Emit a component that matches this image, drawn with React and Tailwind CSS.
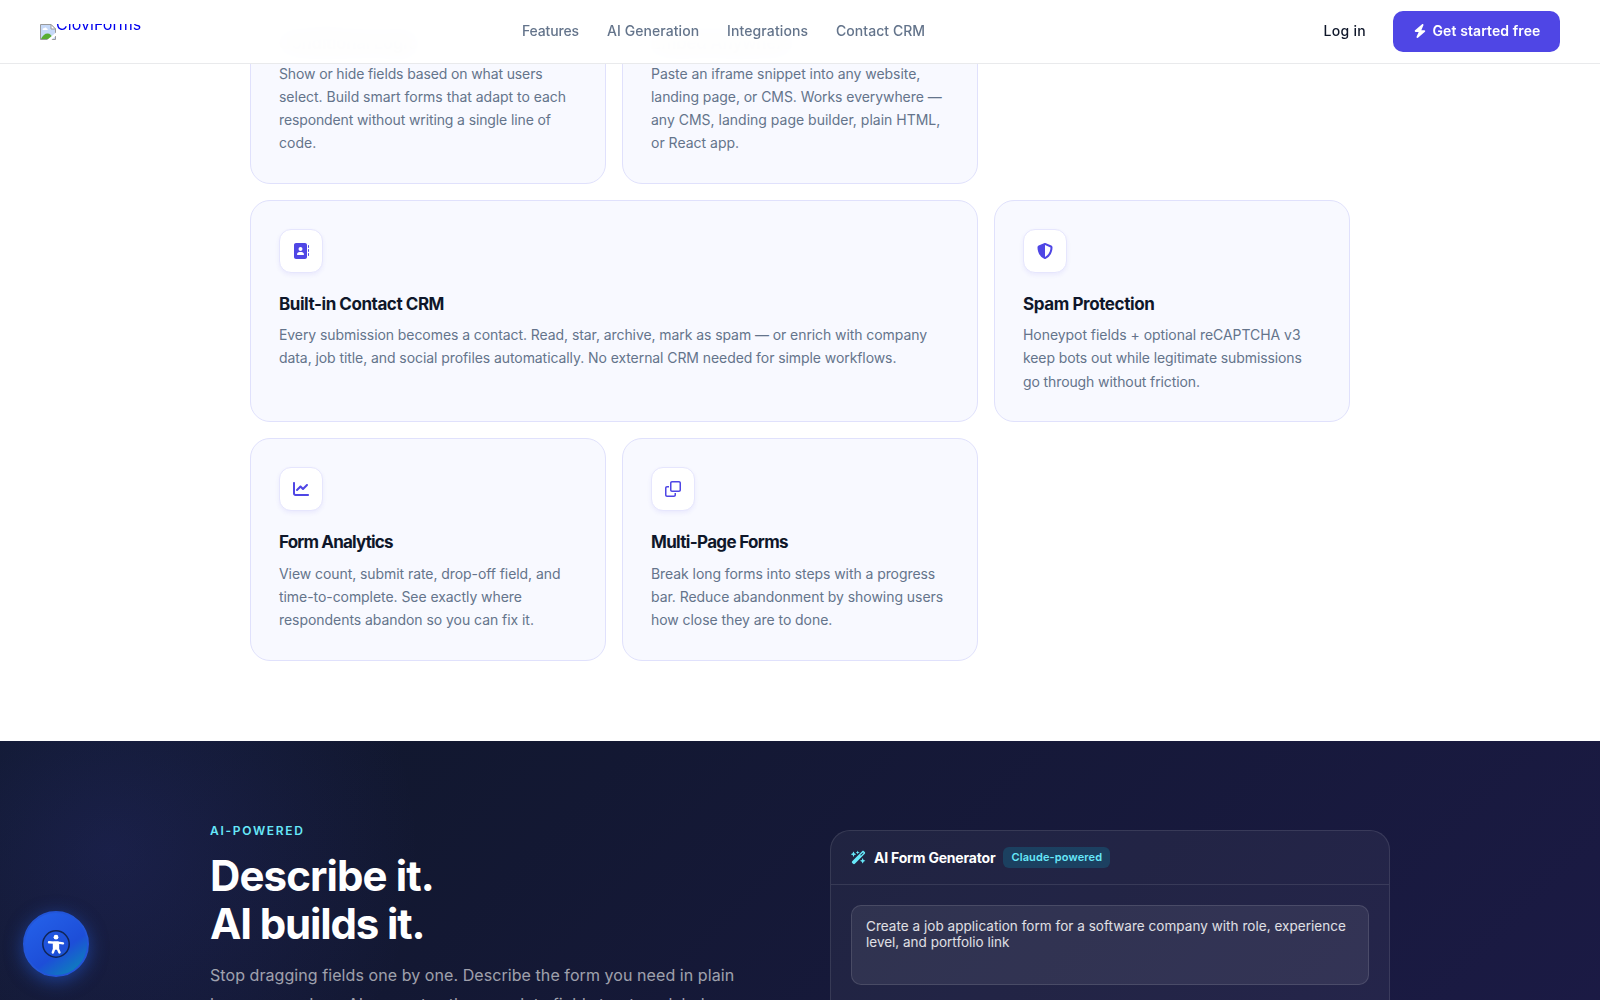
import React from "react";
import {
  FaBolt,
  FaAddressBook,
  FaShieldHalved,
  FaChartLine,
  FaRegClone,
  FaWandMagicSparkles,
  FaCodeBranch,
  FaCode,
} from "react-icons/fa6";

const cards = [
  {
    icon: FaCodeBranch,
    title: "Conditional Logic",
    track: "tracking-[-0.4px]",
    lines: [
      ["Show or hide fields based on what users", "tracking-[-0.13px]"],
      ["select. Build smart forms that adapt to each", "tracking-[-0.02px]"],
      ["respondent without writing a single line of", "tracking-[-0.12px]"],
      ["code.", ""],
    ],
  },
  {
    icon: FaCode,
    title: "Embed Anywhere",
    track: "tracking-[-0.4px]",
    lines: [
      ["Paste an iframe snippet into any website,", "tracking-[-0.05px]"],
      ["landing page, or CMS. Works everywhere —", "tracking-[-0.06px]"],
      ["any CMS, landing page builder, plain HTML,", ""],
      ["or React app.", ""],
    ],
  },
  {
    icon: FaAddressBook,
    title: "Built-in Contact CRM",
    track: "tracking-[-0.45px]",
    wide: true,
    lines: [
      ["Every submission becomes a contact. Read, star, archive, mark as spam — or enrich with company", "tracking-[-0.075px]"],
      ["data, job title, and social profiles automatically. No external CRM needed for simple workflows.", "tracking-[-0.075px]"],
    ],
  },
  {
    icon: FaShieldHalved,
    title: "Spam Protection",
    track: "tracking-[-0.4px]",
    lines: [
      ["Honeypot fields + optional reCAPTCHA v3", "tracking-[-0.05px]"],
      ["keep bots out while legitimate submissions", "tracking-[-0.1px]"],
      ["go through without friction.", "tracking-[-0.11px]"],
    ],
  },
  {
    icon: FaChartLine,
    title: "Form Analytics",
    track: "tracking-[-0.83px]",
    lines: [
      ["View count, submit rate, drop-off field, and", "tracking-[-0.07px]"],
      ["time-to-complete. See exactly where", "tracking-[-0.06px]"],
      ["respondents abandon so you can fix it.", "tracking-[-0.05px]"],
    ],
  },
  {
    icon: FaRegClone,
    title: "Multi-Page Forms",
    track: "tracking-[-0.67px]",
    lines: [
      ["Break long forms into steps with a progress", "tracking-[-0.07px]"],
      ["bar. Reduce abandonment by showing users", "tracking-[-0.05px]"],
      ["how close they are to done.", "tracking-[-0.06px]"],
    ],
  },
];

function Card({ icon: Icon, title, lines, wide, track }) {
  return (
    <div className={`rounded-[20px] border border-[#e0e1fc] bg-[#f8f9ff] px-7 pt-7 pb-[28.8px] ${wide ? "col-span-2" : ""}`}>
      <div className="flex h-11 w-11 items-center justify-center rounded-xl border border-[#e6e6fd] bg-white text-[#4f46e5] shadow-[0_2px_4px_rgba(79,70,229,0.08)]">
        <Icon size={16} />
      </div>
      <h3 className={`mt-[19px] mb-[6.7px] h-[24.6px] text-[17px] leading-[25px] font-bold whitespace-nowrap text-[#0f172a] ${track}`}>{title}</h3>
      <p className="text-[14px] leading-[23.1px] whitespace-nowrap text-[#64748b]">
        {lines.map(([text, spacing]) => (
          <span key={text} className={`block ${spacing}`}>{text}</span>
        ))}
      </p>
    </div>
  );
}

function BrokenImage() {
  return (
    <svg width="16" height="16" viewBox="0 0 16 16" className="shrink-0">
      <path d="M.5.5H11L15.500 5v10.500H.5z" fill="#c6d9f8" stroke="#9a9a9a" />
      <path d="M11 .5V5h4.500z" fill="#fff" stroke="#9a9a9a" />
      <path d="M2.500 5.500c0-1.200 1-1.500 1.600-1.300.5-1.200 2.400-1 2.600.3 1 0 1.300 1 .8 1.500H3z" fill="#fff" />
      <path d="M1 15c1.500-3.500 4-5.500 6.500-5.500 2.500 0 4.500 2 5.500 5.500z" fill="#58ad33" />
      <path d="M16 8.500v3L11.500 16H7z" fill="#fff" />
    </svg>
  );
}

export default function App() {
  return (
    <div className="relative h-[1000px] w-[1600px] overflow-hidden bg-white font-['Inter',sans-serif]">
      <nav className="absolute inset-x-0 top-0 z-20 flex h-16 items-center justify-between border-b border-[#e9eaec] bg-white/[0.97] px-10 backdrop-blur-[12px]">
        <div className="flex h-4 w-[110px] items-start overflow-hidden text-[16px] tracking-[0.05px] text-[#0000ee]">
          <BrokenImage />
          <span className="-mt-[9px] leading-[19px]">CloviForms</span>
        </div>
        <div className="absolute top-[21px] left-[522px] flex text-[14px] leading-5 font-medium whitespace-nowrap text-[#64748b]">
          <span className="w-[85px] tracking-[-0.15px]">Features</span>
          <span className="w-[120px] tracking-[0.07px]">AI Generation</span>
          <span className="w-[109px] tracking-[0.12px]">Integrations</span>
          <span className="tracking-[0.05px]">Contact CRM</span>
        </div>
        <div className="-mt-px flex items-center gap-[27px] text-[14px] whitespace-nowrap">
          <span className="-mt-px font-medium tracking-[0.3px] text-[#0f172a]">Log in</span>
          <span className="flex h-[41px] w-[167px] items-center justify-center gap-[6px] rounded-[10px] bg-[#4f46e5] font-semibold tracking-[0.1px] text-white">
            <FaBolt size={14} />
            <span className="-mt-px">Get started free</span>
          </span>
        </div>
      </nav>

      <section className="mx-auto -mt-[61.4px] w-[1100px] pb-20">
        <div className="grid grid-cols-3 gap-4">
          <Card {...cards[0]} />
          <Card {...cards[1]} />
          <div />
          {cards.slice(2).map((c) => (
            <Card key={c.title} {...c} />
          ))}
        </div>
      </section>

      <section className="flex h-[740px] justify-center gap-[60px] bg-[radial-gradient(circle_at_110px_110px,rgba(79,80,229,0.15),transparent_310px),linear-gradient(135deg,#0f172a_0%,#1e1b4b_100%)] pt-[80px]">
        <div className="w-[560px] whitespace-nowrap">
          <div className="text-[12px] leading-5 font-semibold tracking-[1.7px] text-[#67e8f9]">AI-POWERED</div>
          <h2 className="mt-[11px] text-[42px] leading-[48px] font-bold text-white">
            <span className="block tracking-[-0.9px]">Describe it.</span>
            <span className="block tracking-[-1.15px]">AI builds it.</span>
          </h2>
          <p className="mt-[13px] text-[16px] leading-[28.8px] tracking-[0.07px] text-white/60">
            <span className="block">Stop dragging fields one by one. Describe the form you need in plain</span>
            <span className="block">language and our AI generates the complete field structure, labels,</span>
          </p>
        </div>
        <div className="mt-[9px] h-[500px] w-[560px] rounded-[20px] border border-white/10 bg-white/5 whitespace-nowrap">
          <div className="flex h-[54px] items-center border-b border-white/10 px-5">
            <FaWandMagicSparkles size={15} className="text-[#67e8f9]" />
            <span className="ml-2 text-[14px] font-bold tracking-[-0.2px] text-white">AI Form Generator</span>
            <span className="ml-2 flex h-[21px] items-center rounded-md bg-[#06b6d4]/20 px-2 text-[11px] font-semibold tracking-[0.13px] text-[#67e8f9]">Claude-powered</span>
          </div>
          <div className="mx-5 mt-5 h-20 rounded-[10px] border border-white/[0.12] bg-white/[0.07] px-[14px] pt-3 text-[13.5px] leading-4 text-white/85">
            <span className="block tracking-[0.04px]">Create a job application form for a software company with role, experience</span>
            <span className="block">level, and portfolio link</span>
          </div>
        </div>
      </section>

      <div className="absolute top-[911px] left-[23px] z-30 flex h-[66px] w-[66px] items-center justify-center rounded-full border-2 border-[#2356d8] bg-[linear-gradient(145deg,#2563eb_0%,#1d4ed8_60%,#0891b2_100%)] shadow-[0_4px_18px_rgba(37,99,235,0.5)]">
        <svg width="28" height="28" viewBox="0 0 28 28">
          <circle cx="14" cy="14" r="13.2" fill="none" stroke="#112557" strokeWidth="1.5" />
          <circle cx="14" cy="7.2" r="2.4" fill="#fff" />
          <path d="M7 12.300l5 .3h4l5 .8M12 12.500h4v6h-4zM12.600 17.500l-1.800 5M15.300 17.500l2.200 5" fill="#fff" stroke="#fff" strokeWidth="2.4" strokeLinecap="round" strokeLinejoin="round" />
        </svg>
      </div>
    </div>
  );
}
